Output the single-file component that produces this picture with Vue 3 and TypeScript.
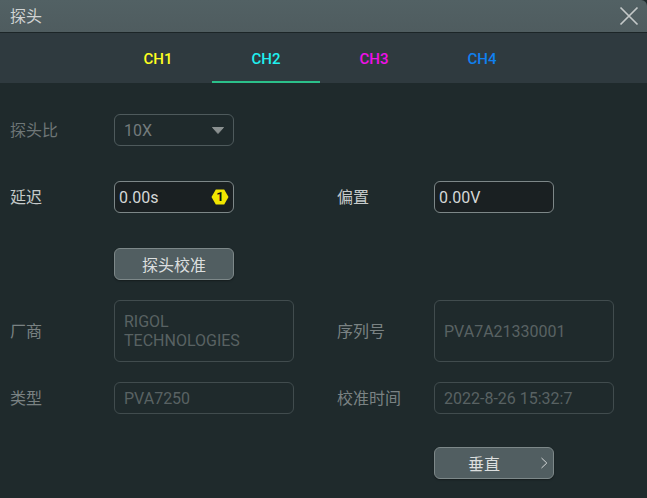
<script setup lang="ts">
const tabs = [
  { name: 'CH1', color: '#ffff20', active: false },
  { name: 'CH2', color: '#20f0f0', active: true },
  { name: 'CH3', color: '#f010e8', active: false },
  { name: 'CH4', color: '#1080f0', active: false },
]
</script>

<template>
  <div class="dialog">
    <header class="title">
      <span class="title-text">探头</span>
      <svg class="close" width="20" height="20" viewBox="0 0 20 20">
        <path d="M1.5 1.5 L18.5 18.5 M18.5 1.5 L1.5 18.5" stroke="#c4c8c8" stroke-width="1.7" fill="none" />
      </svg>
    </header>
    <nav class="tabs">
      <div v-for="t in tabs" :key="t.name" class="tab" :class="{ active: t.active }" :style="{ color: t.color }">{{ t.name }}</div>
    </nav>
    <main class="body">
      <div class="row r-ratio">
        <span class="label">探头比</span>
        <div class="field combo w120"><span>10X</span>
          <svg class="caret" width="14" height="9" viewBox="0 0 14 9"><path d="M1.5 1.5 H12.5 L7 7.5 Z" fill="#8a9090" stroke="#8a9090" stroke-linejoin="round" /></svg>
        </div>
      </div>
      <div class="row r-delay">
        <span class="label">延迟</span>
        <div class="field input w120 ctl">
          <span>0.00s</span>
          <span class="badge">
            <svg width="18" height="16" viewBox="0 0 18 16"><path d="M0.5 8 L4.8 0.5 H13.2 L17.5 8 L13.2 15.5 H4.8 Z" fill="#f2e600" /></svg>
            <b>1</b>
          </span>
        </div>
        <span class="label right">偏置</span>
        <div class="field input w120 ctl"><span>0.00V</span></div>
      </div>
      <div class="row r-cal">
        <span class="label"></span>
        <button class="btn w120">探头校准</button>
      </div>
      <div class="row r-vendor">
        <span class="label dim2">厂商</span>
        <div class="field ro w180 tall">RIGOL<br />TECHNOLOGIES</div>
        <span class="label right dim2">序列号</span>
        <div class="field ro w180 tall one">PVA7A21330001</div>
      </div>
      <div class="row r-type">
        <span class="label dim2">类型</span>
        <div class="field ro w180">PVA7250</div>
        <span class="label right dim2">校准时间</span>
        <div class="field ro w180">2022-8-26 15:32:7</div>
      </div>
      <div class="row r-vert">
        <span class="label"></span>
        <span class="spacer"></span>
        <span class="label right"></span>
        <button class="btn w120 next">
          <span class="next-text">垂直</span>
          <svg class="chev" width="8" height="12" viewBox="0 0 8 12"><path d="M1.5 1 L6.8 6 L1.5 11" stroke="#d5d8d8" stroke-width="1" fill="none" /></svg>
        </button>
      </div>
    </main>
  </div>
</template>

<style>
html, body { margin: 0; padding: 0; background: #1f2a2c; }
</style>

<style scoped>
.dialog {
  width: 647px;
  height: 498px;
  display: flex;
  flex-direction: column;
  background: #1f2a2c;
  font-family: Roboto, "Noto Sans CJK SC", sans-serif;
  overflow: hidden;
  border-top-right-radius: 6px;
}
.title {
  height: 32px;
  flex: none;
  display: flex;
  align-items: center;
  justify-content: space-between;
  padding: 0 8px 0 10px;
  background: linear-gradient(#526164, #4f5c5f);
  border-bottom: 1px solid #1c2527;
  color: #d0d3d3;
  font-size: 16px;
}
.title-text { padding-bottom: 3px; }
.tabs {
  height: 50px;
  flex: none;
  display: flex;
  padding-left: 104px;
  background: #2f3a3f;
}
.tab {
  width: 108px;
  display: flex;
  align-items: center;
  justify-content: center;
  font-size: 15px;
  font-weight: 500;
  box-sizing: border-box;
  margin-top: 1px;
}
.tab.active { border-bottom: 2px solid #2bc08a; padding-top: 2px; }
.body { flex: 1; padding: 31px 0 0 10px; }
.row { display: flex; align-items: center; }
.r-delay, .r-cal { margin-top: 35px; }
.r-vendor { margin-top: 20px; }
.r-type { margin-top: 20px; }
.r-vert { margin-top: 33px; }
.label {
  width: 104px;
  flex: none;
  font-size: 16px;
  color: #c6caca;
  padding-bottom: 3px;
}
.label.right { width: 97px; }
.spacer { width: 223px; }
.r-ratio .label { color: #6e7677; }
.dim2 { color: #7a8283 !important; }
.row > .label:first-child + .w120 { margin-right: 103px; }
.row > .label:first-child + .w180 { margin-right: 43px; }
.field {
  box-sizing: border-box;
  height: 32px;
  border-radius: 6px;
  font-size: 16px;
  display: flex;
  align-items: center;
  position: relative;
}
.w120 { width: 120px; }
.w180 { width: 180px; }
.combo {
  border: 1px solid #4e5a5c;
  padding-left: 9px;
  color: #737b7c;
  justify-content: space-between;
  padding-right: 8px;
}
.input {
  border: 1px solid #7d8788;
  background: #1a2022;
  color: #d4d7d7;
  padding-left: 4px;
}
.badge {
  position: absolute;
  right: 4px;
  top: 7px;
  width: 18px;
  height: 16px;
  display: flex;
  align-items: center;
  justify-content: center;
}
.badge svg { position: absolute; inset: 0; }
.badge b {
  position: relative;
  color: #111;
  font-size: 13px;
  font-weight: 700;
  line-height: 16px;
}
.ro {
  border: 1px solid #414c4e;
  color: #596263;
  padding-left: 9px;
}
.tall {
  height: 62px;
  line-height: 19px;
  display: block;
  padding-top: 11px;
}
.tall.one { padding-top: 21px; }
.btn {
  box-sizing: border-box;
  height: 32px;
  border-radius: 6px;
  border: 1px solid #7d8889;
  background: #515e61;
  color: #dcdfdf;
  font-family: inherit;
  font-size: 16px;
  padding: 0;
  position: relative;
  box-shadow: 0 1px 2px rgba(0,0,0,.35);
}
.next-text { position: relative; left: -10px; }
.chev { position: absolute; right: 5px; top: 9px; }
</style>
